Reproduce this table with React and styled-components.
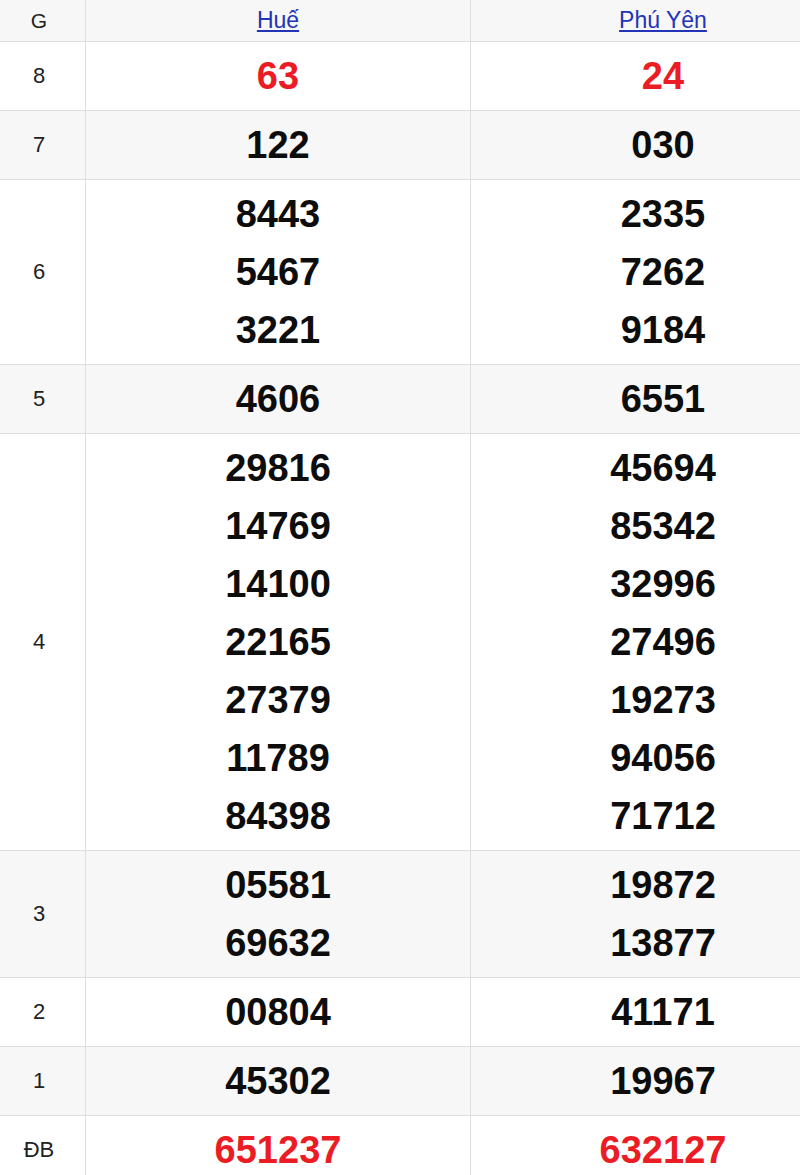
import React from "react";
import styled, { createGlobalStyle } from "styled-components";

const Global = createGlobalStyle`
  html, body { margin: 0; padding: 0; background: #fff; overflow: hidden; }
  body { font-family: "Liberation Sans", Arial, sans-serif; }
`;

const Viewport = styled.div`
  width: 800px;
  overflow: hidden;
`;

const Table = styled.table`
  border-collapse: collapse;
  table-layout: fixed;
  width: 863px;
  margin-left: -8px;
`;

const Col = styled.col`
  width: ${(p) => p.$w}px;
`;

const Row = styled.tr`
  background: ${(p) => (p.$shade ? "#f7f7f7" : "#ffffff")};
`;

const HeadCell = styled.th`
  height: 41px;
  padding: 0;
  border: 1px solid #dedede;
  border-top: none;
  text-align: center;
  vertical-align: middle;
  font-weight: normal;
  font-size: 21px;
  color: #222;
`;

const ProvinceLink = styled.a`
  font-size: 23px;
  color: #2234b8;
  text-decoration: underline;
  text-underline-offset: 2px;
`;

const LabelCell = styled.td`
  padding: 5px 0;
  border: 1px solid #dedede;
  text-align: center;
  vertical-align: middle;
  font-size: 22px;
  color: #222;
`;

const NumCell = styled.td`
  padding: 5px 0;
  border: 1px solid #dedede;
  text-align: center;
  vertical-align: middle;
`;

const Num = styled.div`
  font-size: 38px;
  font-weight: bold;
  line-height: 58px;
  color: ${(p) => (p.$red ? "#ec1c24" : "#0d0d0d")};
`;

const rows = [
  { g: "8", a: ["63"], b: ["24"], red: true },
  { g: "7", a: ["122"], b: ["030"] },
  { g: "6", a: ["8443", "5467", "3221"], b: ["2335", "7262", "9184"] },
  { g: "5", a: ["4606"], b: ["6551"] },
  {
    g: "4",
    a: ["29816", "14769", "14100", "22165", "27379", "11789", "84398"],
    b: ["45694", "85342", "32996", "27496", "19273", "94056", "71712"],
  },
  { g: "3", a: ["05581", "69632"], b: ["19872", "13877"] },
  { g: "2", a: ["00804"], b: ["41171"] },
  { g: "1", a: ["45302"], b: ["19967"] },
  { g: "ĐB", a: ["651237"], b: ["632127"], red: true },
];

export default function App() {
  return (
    <Viewport>
      <Global />
      <Table>
        <colgroup>
          <Col $w={93} />
          <Col $w={385} />
          <Col $w={385} />
        </colgroup>
        <thead>
          <Row $shade>
            <HeadCell>G</HeadCell>
            <HeadCell>
              <ProvinceLink href="#">Huế</ProvinceLink>
            </HeadCell>
            <HeadCell>
              <ProvinceLink href="#">Phú Yên</ProvinceLink>
            </HeadCell>
          </Row>
        </thead>
        <tbody>
          {rows.map((r, i) => (
            <Row key={r.g} $shade={i % 2 === 1}>
              <LabelCell>{r.g}</LabelCell>
              <NumCell>
                {r.a.map((n, j) => (
                  <Num key={j} $red={r.red}>
                    {n}
                  </Num>
                ))}
              </NumCell>
              <NumCell>
                {r.b.map((n, j) => (
                  <Num key={j} $red={r.red}>
                    {n}
                  </Num>
                ))}
              </NumCell>
            </Row>
          ))}
        </tbody>
      </Table>
    </Viewport>
  );
}
